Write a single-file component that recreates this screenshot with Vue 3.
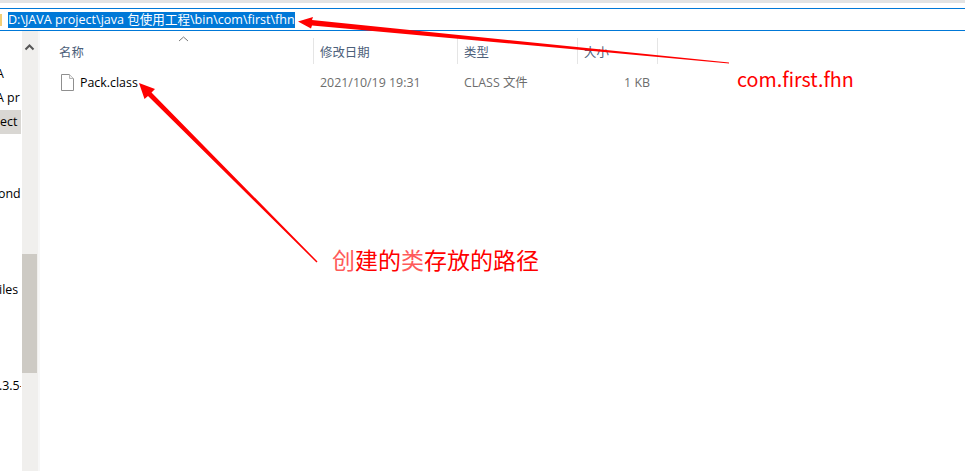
<template>
  <div class="explorer">
    <div class="top-line"></div>

    <div class="address-bar">
      <span class="folder-sliver"></span>
      <span class="address-text">D:\JAVA project\java 包使用工程\bin\com\first\fhn</span>
    </div>

    <div class="body">
      <aside class="nav">
        <div class="nav-list">
          <div
            v-for="(item, i) in navItems"
            :key="i"
            class="nav-row"
            :class="{ selected: item.selected }"
          >
            <span class="nav-text" :class="item.cls">{{ item.text }}</span>
          </div>
        </div>
        <div class="scrollbar">
          <svg class="scroll-up" width="16" height="10" viewBox="0 0 16 10">
            <path d="M3.5 7.5 L7.5 3.5 L11.5 7.5" fill="none" stroke="#555" stroke-width="2" />
          </svg>
          <div class="scroll-thumb"></div>
        </div>
        <div class="nav-edge"></div>
      </aside>

      <main class="files">
        <div class="header">
          <svg class="sort-caret" width="11" height="6" viewBox="0 0 11 6">
            <path d="M1 5 L5.5 1 L10 5" fill="none" stroke="#7a7a7a" stroke-width="1" />
          </svg>
          <div class="col col-name">名称</div>
          <div class="col col-date">修改日期</div>
          <div class="col col-type">类型</div>
          <div class="col col-size">大小</div>
          <div class="col col-end"></div>
        </div>

        <div class="row">
          <div class="cell col-name name-cell">
            <svg class="file-icon" width="16" height="18" viewBox="0 0 16 18">
              <path d="M2.5 1.5 H10.5 L14.5 5.5 V17.5 H2.5 Z" fill="#fff" stroke="#8f8f8f" />
              <path d="M10.5 1.5 V5.5 H14.5" fill="#f0f0f0" stroke="#b5b5b5" />
            </svg>
            <span class="file-name">Pack.class</span>
          </div>
          <div class="cell col-date">2021/10/19 19:31</div>
          <div class="cell col-type">CLASS 文件</div>
          <div class="cell col-size size-cell">1 KB</div>
        </div>
      </main>
    </div>

    <span class="note note-path">com.first.fhn</span>
    <span class="note note-class"><i>创</i>建的<i>类</i>存放的路径</span>

    <svg class="arrows" width="965" height="471" viewBox="0 0 965 471">
      <polygon points="729,63.5 729,62.5 312,20 313,17 298,21.5 311,28.5 312,25.5" fill="#ff0000" />
      <polygon points="317.5,261.5 316.5,262.5 148,96 144.5,99 139,83 155,89 151.5,92.5" fill="#ff0000" />
    </svg>
  </div>
</template>

<script setup>
const navItems = [
  { text: 'A', cls: 'cut-a' },
  { text: 'A pr', cls: 'cut-pr' },
  { text: 'ect', cls: 'cut-ect', selected: true },
  { text: '' },
  { text: '' },
  { text: 'ond', cls: 'cut-ond' },
  { text: '' },
  { text: '' },
  { text: '' },
  { text: 'iles', cls: 'cut-iles' },
  { text: '' },
  { text: '' },
  { text: '' },
  { text: '.3.5-', cls: 'cut-ver' }
]
</script>

<style>
html,
body {
  margin: 0;
  background: #fff;
}
</style>

<style scoped>
.explorer {
  position: relative;
  width: 965px;
  height: 471px;
  overflow: hidden;
  background: #fff;
  font-family: "Open Sans", "Noto Sans CJK SC", sans-serif;
  font-size: 12.4px;
}

.top-line {
  height: 3px;
  background: #e3e3e3;
  margin-bottom: 5px;
}

.address-bar {
  display: flex;
  align-items: center;
  height: 21px;
  border-top: 1px solid #0078d7;
  border-bottom: 1px solid #0078d7;
}

.folder-sliver {
  width: 2px;
  height: 12px;
  background: #f3cf75;
  margin-right: 6px;
}

.address-text {
  background: #0078d7;
  color: #fff;
  font-size: 12.55px;
  line-height: 16px;
  white-space: nowrap;
}

.body {
  display: flex;
  height: 440px;
}

.nav {
  display: flex;
  flex-shrink: 0;
  width: 40px;
}

.nav-list {
  width: 22px;
  padding-top: 31px;
  overflow: hidden;
}

.nav-row {
  width: 21px;
  height: 24px;
  line-height: 24px;
  white-space: nowrap;
  overflow: hidden;
  color: #000;
}

.nav-row.selected {
  background: #d9d7d3;
}

.cut-a {
  margin-left: -4px;
}

.cut-pr {
  margin-left: -4px;
}

.cut-ond {
  margin-left: -2px;
}

.cut-iles {
  margin-left: -1px;
}

.cut-ver {
  margin-left: -1px;
}

.scrollbar {
  position: relative;
  width: 16px;
  background: #f0efed;
}

.scroll-up {
  display: block;
  margin-top: 11px;
}

.scroll-thumb {
  position: absolute;
  top: 223px;
  left: 0;
  width: 15px;
  height: 119px;
  background: #cdcac4;
}

.nav-edge {
  width: 2px;
  background: #f7f7f7;
}

.files {
  flex: 1;
  padding-top: 7px;
}

.header {
  position: relative;
  display: flex;
  height: 26px;
  color: #4c607a;
}

.sort-caret {
  position: absolute;
  left: 138px;
  top: -2px;
}

.col {
  box-sizing: border-box;
  line-height: 29px;
  border-right: 1px solid #e5e5e5;
  padding-left: 6px;
}

.col-name {
  width: 274px;
  padding-left: 19px;
  box-sizing: border-box;
}

.col-date {
  width: 144px;
  padding-left: 6px;
  box-sizing: border-box;
}

.col-type {
  width: 120px;
  padding-left: 6px;
  box-sizing: border-box;
}

.col-size {
  width: 80px;
  box-sizing: border-box;
}

.col-end {
  width: 0;
  padding: 0;
  border-right: none;
}

.row {
  display: flex;
  height: 24px;
  margin-top: 6px;
  align-items: center;
  color: #6d6d6d;
}

.cell {
  white-space: nowrap;
}

.name-cell {
  display: flex;
  align-items: center;
}

.file-icon {
  flex-shrink: 0;
  margin-right: 5px;
}

.file-name {
  color: #000;
}

.size-cell {
  text-align: right;
  padding-right: 8px;
}

.note {
  position: absolute;
  color: #ff0000;
  white-space: nowrap;
  font-family: "Noto Sans CJK SC", "Noto Sans", sans-serif;
}

.note-path {
  left: 737px;
  top: 66px;
  font-size: 19.7px;
  line-height: 26px;
}

.note-class {
  left: 332px;
  top: 245px;
  font-size: 23px;
  line-height: 28px;
}

.note-class i {
  font-style: normal;
  color: #ff5a5a;
}

.arrows {
  position: absolute;
  left: 0;
  top: 0;
  pointer-events: none;
}
</style>
